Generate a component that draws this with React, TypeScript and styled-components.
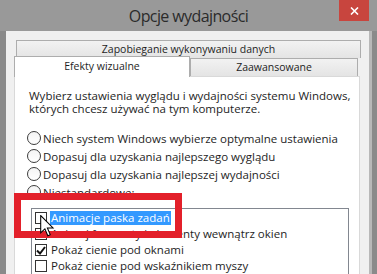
import React from 'react';
import styled, { createGlobalStyle } from 'styled-components';

const GlobalStyle = createGlobalStyle`
  html, body {
    margin: 0;
    padding: 0;
  }
  body {
    width: 377px;
    height: 274px;
    overflow: hidden;
    background: #8c8c8c;
    font-family: "Open Sans", "Noto Sans", sans-serif;
  }
`;

const Frame = styled.div`
  position: relative;
  width: 377px;
  height: 274px;
  overflow: hidden;
  display: flex;
  flex-direction: column;
  background: #8a8a8a;
`;

const TitleBar = styled.div`
  height: 31px;
  flex-shrink: 0;
  display: grid;
  grid-template-columns: 1fr auto 1fr;
  background: #999999;
`;

const Title = styled.div`
  grid-column: 2;
  align-self: center;
  font-size: 16px;
  color: #2b2b2b;
  letter-spacing: -0.6px;
  padding-top: 1px;
`;

const CloseButton = styled.div`
  grid-column: 3;
  justify-self: end;
  width: 30px;
  height: 21px;
  margin-right: 8px;
  background: #c8453e;
  display: flex;
  align-items: center;
  justify-content: center;
`;

const Body = styled.div`
  flex: 1;
  min-height: 0;
  display: flex;
  flex-direction: column;
  margin: 0 5px 0 6px;
  padding: 9px 9px 0 8px;
  background: #f0f0f0;
  border-right: 3px solid #b8b8b8;
`;

const TabRow = styled.div<{ $top?: boolean }>`
  display: flex;
  align-items: flex-end;
  height: 18px;
  flex-shrink: 0;
  margin: ${(p) => (p.$top ? '0 -1px 0 2px' : '0')};
`;

const Tab = styled.div<{ $width?: number; $active?: boolean }>`
  box-sizing: border-box;
  flex: ${(p) => (p.$width ? `0 0 ${p.$width}px` : '1')};
  height: ${(p) => (p.$active ? '21px' : '18px')};
  margin-bottom: ${(p) => (p.$active ? '-1px' : '0')};
  position: ${(p) => (p.$active ? 'relative' : 'static')};
  z-index: ${(p) => (p.$active ? 1 : 0)};
  border: 1px solid #adadad;
  border-bottom: none;
  background: ${(p) =>
    p.$active ? '#ffffff' : 'linear-gradient(#f2f2f2, #e4e4e4)'};
  display: flex;
  justify-content: center;
  padding-top: ${(p) => (p.$active ? '2px' : '1px')};
  font-size: 10.5px;
  line-height: 14px;
  color: #1e1e1e;
`;

const Panel = styled.div`
  flex: 1;
  min-height: 0;
  background: #ffffff;
  border: 1px solid #d9d9d9;
  border-bottom: none;
  padding: 12px 10px 0 14px;
  display: flex;
  flex-direction: column;
`;

const Intro = styled.p`
  margin: 0;
  font-size: 11.5px;
  line-height: 13px;
  color: #1e1e1e;
  white-space: nowrap;
`;

const RadioGroup = styled.div`
  display: flex;
  flex-direction: column;
  margin: 14px 0 0 -2px;
`;

const RadioRow = styled.div`
  display: flex;
  align-items: center;
  height: 18px;
  gap: 2px;
  font-size: 11.5px;
  color: #1e1e1e;
  white-space: nowrap;
`;

const RadioDot = styled.span`
  box-sizing: border-box;
  width: 14px;
  height: 14px;
  border-radius: 50%;
  border: 1px solid #3c3c3c;
  background: linear-gradient(#f4f4f4, #ffffff);
  flex-shrink: 0;
`;

const ListBox = styled.div`
  margin: 7px 0 0 2px;
  border: 1px solid #828790;
  border-bottom: none;
  padding: 1px 0 0 3px;
  flex: 1;
  display: flex;
  flex-direction: column;
`;

const CheckRow = styled.div`
  display: flex;
  align-items: center;
  height: 16px;
  flex-shrink: 0;
  gap: 3px;
  font-size: 11.5px;
  white-space: nowrap;
`;

const CheckBox = styled.span`
  box-sizing: border-box;
  width: 12px;
  height: 12px;
  border: 1px solid #333333;
  background: #ffffff;
  flex-shrink: 0;
  display: flex;
  align-items: center;
  justify-content: center;
`;

const Label = styled.span<{ $selected?: boolean }>`
  padding: 0 1px;
  line-height: 14px;
  background: ${(p) => (p.$selected ? '#3399ff' : 'transparent')};
  color: ${(p) => (p.$selected ? '#ffffff' : '#1e1e1e')};
`;

const Highlight = styled.div`
  position: absolute;
  left: 14px;
  top: 193px;
  width: 168px;
  height: 45px;
  box-sizing: border-box;
  border: 7px solid #e3202a;
  pointer-events: none;
`;

const Cursor = styled.svg`
  position: absolute;
  left: 40px;
  top: 215px;
`;

const radios = [
  'Niech system Windows wybierze optymalne ustawienia',
  'Dopasuj dla uzyskania najlepszego wyglądu',
  'Dopasuj dla uzyskania najlepszej wydajności',
  'Niestandardowe:',
];

const effects = [
  { label: 'Animacje paska zadań', checked: false, selected: true },
  { label: 'Animuj formanty i elementy wewnątrz okien', checked: false },
  { label: 'Pokaż cienie pod oknami', checked: true },
  { label: 'Pokaż cienie pod wskaźnikiem myszy', checked: false },
];

const App: React.FC = () => (
  <>
    <GlobalStyle />
    <Frame>
      <TitleBar>
        <Title>Opcje wydajności</Title>
        <CloseButton>
          <svg width="9" height="8" viewBox="0 0 9 8">
            <path d="M1 0.5 L8 7.5 M8 0.5 L1 7.5" stroke="#ffffff" strokeWidth="1.6" />
          </svg>
        </CloseButton>
      </TitleBar>
      <Body>
        <TabRow $top>
          <Tab>Zapobieganie wykonywaniu danych</Tab>
        </TabRow>
        <TabRow>
          <Tab $width={176} $active>
            Efekty wizualne
          </Tab>
          <Tab $width={168}>Zaawansowane</Tab>
        </TabRow>
        <Panel>
          <Intro>
            Wybierz ustawienia wyglądu i wydajności systemu Windows,
            <br />
            których chcesz używać na tym komputerze.
          </Intro>
          <RadioGroup>
            {radios.map((r) => (
              <RadioRow key={r}>
                <RadioDot />
                {r}
              </RadioRow>
            ))}
          </RadioGroup>
          <ListBox>
            {effects.map((e) => (
              <CheckRow key={e.label}>
                <CheckBox>
                  {e.checked && (
                    <svg width="10" height="9" viewBox="0 0 10 9">
                      <path d="M1 4.5 L4 7.5 L9 1" fill="none" stroke="#111" strokeWidth="2" />
                    </svg>
                  )}
                </CheckBox>
                <Label $selected={e.selected}>{e.label}</Label>
              </CheckRow>
            ))}
          </ListBox>
        </Panel>
      </Body>
      <Highlight />
      <Cursor width="15" height="23" viewBox="0 0 14 22">
        <path
          d="M0.5 0.5 L0.5 17 L4.5 13.2 L7.3 19.8 L9.6 18.8 L6.9 12.4 L12.3 12.4 Z"
          fill="#ffffff"
          stroke="#000000"
          strokeWidth="1"
          strokeLinejoin="miter"
        />
      </Cursor>
    </Frame>
  </>
);

export default App;
